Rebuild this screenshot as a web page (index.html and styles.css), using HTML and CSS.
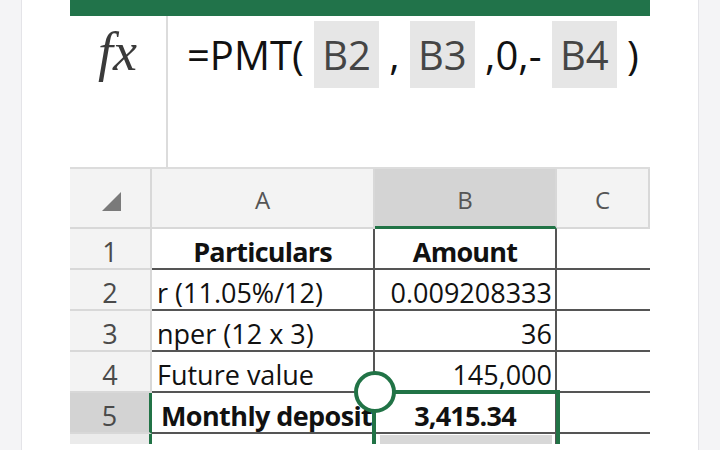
FILE: index.html
```html
<!DOCTYPE html>
<html lang="en">
<head>
  <meta charset="UTF-8" />
  <title>PMT - Monthly deposit</title>
  <meta name="viewport" content="width=device-width, initial-scale=1.0" />
  <link rel="stylesheet" href="styles.css">
</head>
<body>
  <div class="page">
    <div class="side side-left"></div>

    <main class="main">
      <div class="ribbon"></div>

      <!-- formula bar -->
      <div class="formula-bar">
        <div class="fx">fx</div>
        <div class="formula">=PMT( <span class="ref">B2</span> , <span class="ref">B3</span> ,0,- <span class="ref">B4</span> )</div>
      </div>

      <!-- sheet -->
      <div class="sheet">
        <div class="cell corner"><span class="corner-tri"></span></div>
        <div class="cell col-head">A</div>
        <div class="cell col-head active">B</div>
        <div class="cell col-head">C</div>

        <div class="cell row-head">1</div>
        <div class="cell bold center">Particulars</div>
        <div class="cell bold center">Amount</div>
        <div class="cell last"></div>

        <div class="cell row-head">2</div>
        <div class="cell">r (11.05%/12)</div>
        <div class="cell num">0.009208333</div>
        <div class="cell last"></div>

        <div class="cell row-head">3</div>
        <div class="cell">nper (12 x 3)</div>
        <div class="cell num">36</div>
        <div class="cell last"></div>

        <div class="cell row-head">4</div>
        <div class="cell">Future value</div>
        <div class="cell num">145,000</div>
        <div class="cell last"></div>

        <div class="cell row-head active">5</div>
        <div class="cell bold deposit">Monthly deposit</div>
        <div class="cell bold center">3,415.34</div>
        <div class="cell last"></div>

        <!-- row 6 is only partly visible -->
        <div class="cell row-head edge"></div>
        <div class="cell"></div>
        <div class="cell"><div class="fill-bar"></div></div>
        <div class="cell last"></div>

        <!-- selection outline over B5 -->
        <div class="selection"></div>
        <div class="handle"></div>
      </div>
    </main>

    <div class="side side-right"></div>
  </div>
</body>
</html>
```

FILE: styles.css
```css
body {
  margin: 0;
  background: #fff;
  font-family: "Open Sans", "Noto Sans", sans-serif;
  color: #111;
}
.page {
  display: flex;
  height: 450px;
  overflow: hidden;
}
.side {
  width: 21px;
  background: #f4f4f6;
}
.side-left {
  border-right: 1px solid #e4e4e8;
}
.side-right {
  width: 21px;
  border-left: 1px solid #e4e4e8;
}
.main {
  flex: 1;
  padding-left: 48px;
}
.ribbon {
  width: 580px;
  height: 16px;
  background: #21734a;
}

/* formula bar */
.formula-bar {
  display: flex;
  width: 580px;
  height: 153px;
  box-sizing: border-box;
  border-bottom: 2px solid #dcdcdc;
}
.fx {
  width: 98px;
  box-sizing: border-box;
  border-right: 2px solid #dcdcdc;
  padding: 6px 0 0 28px;
  font-family: "Liberation Serif", "DejaVu Serif", serif;
  font-style: italic;
  font-size: 54px;
  line-height: 60px;
  color: #3a3a3a;
}
.formula {
  padding: 5px 0 0 19px;
  font-size: 40px;
  line-height: 67px;
  white-space: nowrap;
  color: #111;
}
.ref {
  display: inline-block;
  padding: 0 8px;
  background: #e6e6e6;
  color: #454545;
  line-height: 67px;
}

/* sheet grid */
.sheet {
  position: relative;
  display: grid;
  grid-template-columns: 82px 223px 182px 93px;
  grid-template-rows: 60px;
  grid-auto-rows: 41px;
  width: 580px;
  height: 275px;
  overflow: hidden;
}
.cell {
  box-sizing: border-box;
  border-right: 2px solid #555;
  border-bottom: 2px solid #555;
  padding: 4px 5px 0;
  font-size: 27px;
  line-height: 37px;
  white-space: nowrap;
  overflow: hidden;
}
.cell.last {
  border-right: none;
}
.bold {
  font-weight: bold;
  letter-spacing: -0.8px;
}
.center {
  text-align: center;
}
.num {
  text-align: right;
  padding-right: 3px;
}
.deposit {
  padding-left: 9px;
  letter-spacing: -0.6px;
}
.corner,
.col-head,
.row-head {
  background: #f3f3f3;
  border-color: #d8d8d8;
  color: #4a4a4a;
  text-align: center;
}
.corner {
  display: flex;
  justify-content: center;
  align-items: center;
  padding: 6px 0 0 3px;
}
.corner-tri {
  width: 0;
  height: 0;
  border-left: 19px solid transparent;
  border-bottom: 19px solid #7a7a7a;
}
.col-head {
  font-size: 24px;
  padding-top: 12px;
  color: #555;
}
.col-head.active {
  background: #d4d4d4;
  border-bottom: 3px solid #217346;
}
.row-head {
  font-size: 27px;
}
.row-head.active {
  background: #d3d3d3;
  border-right: 3px solid #217346;
}
.row-head.edge {
  background: #ebebeb;
  border-right: 3px solid #217346;
}
.fill-bar {
  height: 9px;
  margin: -3px -2px 0 0;
  background: #d8d8d8;
}

/* selection + handle sit above the cells */
.selection {
  position: absolute;
  left: 302px;
  top: 221px;
  width: 188px;
  height: 70px;
  box-sizing: border-box;
  border: 4px solid #217346;
  border-bottom: none;
}
.handle {
  position: absolute;
  left: 284px;
  top: 202px;
  width: 42px;
  height: 42px;
  box-sizing: border-box;
  border: 4px solid #217346;
  border-radius: 50%;
  background: #fff;
}
```
